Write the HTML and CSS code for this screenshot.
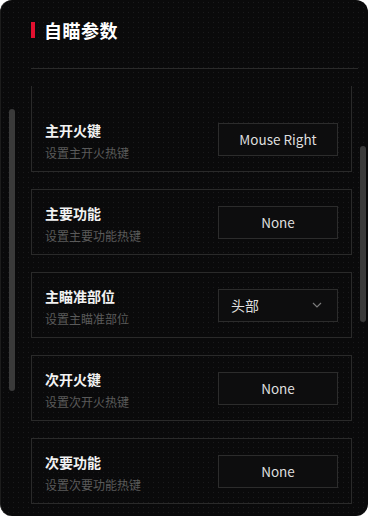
FILE: index.html
```html
<!DOCTYPE html>
<html lang="zh-CN">
<head>
    <meta charset="UTF-8">
    <meta name="viewport" content="width=device-width, initial-scale=1.0">
    <title>自瞄参数</title>
    <link rel="stylesheet" href="styles.css">
</head>
<body>
    <section class="panel">
      <header class="panel-header">
        <h1 class="panel-title">自瞄参数</h1>
      </header>

      <div class="panel-list">
        <div class="setting setting-first">
          <div class="setting-text">
            <span class="setting-name">主开火键</span>
            <span class="setting-hint">设置主开火热键</span>
          </div>
          <button class="setting-key" type="button">Mouse Right</button>
        </div>

        <div class="setting">
          <div class="setting-text">
            <span class="setting-name">主要功能</span>
            <span class="setting-hint">设置主要功能热键</span>
          </div>
          <button class="setting-key" type="button">None</button>
        </div>

        <div class="setting">
          <div class="setting-text">
            <span class="setting-name">主瞄准部位</span>
            <span class="setting-hint">设置主瞄准部位</span>
          </div>
          <button class="setting-key setting-select" type="button">
            头部
            <svg class="setting-arrow" width="10" height="6" viewBox="0 0 10 6" aria-hidden="true">
              <path d="M1 1l4 4 4-4" fill="none" stroke="currentColor" stroke-width="1.2"/>
            </svg>
          </button>
        </div>

        <div class="setting">
          <div class="setting-text">
            <span class="setting-name">次开火键</span>
            <span class="setting-hint">设置次开火热键</span>
          </div>
          <button class="setting-key" type="button">None</button>
        </div>

        <div class="setting">
          <div class="setting-text">
            <span class="setting-name">次要功能</span>
            <span class="setting-hint">设置次要功能热键</span>
          </div>
          <button class="setting-key" type="button">None</button>
        </div>
      </div>

      <span class="scroll-thumb scroll-thumb-left"></span>
      <span class="scroll-thumb scroll-thumb-right"></span>
    </section>
</body>
</html>
```

FILE: styles.css
```css
html,
body {
  height: 100%;
}

body {
  margin: 0;
  padding: 0;
  background-color: #ffffff;
  font-family: "Noto Sans CJK SC", "Noto Sans", sans-serif;
  color: #ffffff;
}

.panel {
  position: relative;
  box-sizing: border-box;
  display: flex;
  flex-direction: column;
  width: 368px;
  height: 516px;
  overflow: hidden;

  background-color: #0a0a0b;
  background-image: radial-gradient(circle, #1a1a1c 0.7px, transparent 0.8px);
  background-size: 5px 5px;
  border-radius: 12px;
  border-left: 1px solid #1c1c1c;
}

.panel-header {
  flex-shrink: 0;
  margin: 0 10px 0 30px;
  padding: 18px 0 0;
  height: 50px;
  border-bottom: 1px solid #2a2a2a;
}

.panel-title {
  display: flex;
  align-items: center;
  gap: 9px;
  margin: 0;
  font-size: 18px;
  line-height: 24px;
  font-weight: 700;
  letter-spacing: 0.5px;
}

.panel-title::before {
  content: "";
  width: 4px;
  height: 16px;
  background-color: #e3102f;
}

.panel-list {
  display: flex;
  flex-direction: column;
  gap: 17px;
  flex-grow: 1;
  margin: 17px 16px 0 30px;
  overflow: hidden;
}

.setting {
  display: flex;
  align-items: center;
  justify-content: space-between;
  flex-shrink: 0;
  box-sizing: border-box;
  height: 66px;
  padding: 0 13px;
  border: 1px solid #2a2a2a;
}

.setting-first {
  height: 87px;
  margin-top: -1px;
  padding-top: 21px;
}

.setting-text {
  display: flex;
  flex-direction: column;
  gap: 4px;
  padding-top: 4px;
}

.setting-name {
  font-size: 14px;
  line-height: 20px;
  font-weight: 700;
  color: #f2f2f2;
}

.setting-hint {
  font-size: 12px;
  line-height: 18px;
  color: #5a5a5a;
}

.setting-key {
  box-sizing: border-box;
  width: 120px;
  height: 33px;
  padding: 0 12px;

  font: inherit;
  font-size: 13.5px;
  color: #dedede;

  background-color: #0d0d0e;
  border: 1px solid #2c2c2c;
  cursor: pointer;
}

.setting-select {
  display: flex;
  align-items: center;
  justify-content: space-between;
  font-size: 14px;
}

.setting-arrow {
  margin-right: 3px;
  color: #7a7a7a;
}

.scroll-thumb {
  position: absolute;
  width: 6px;
  border-radius: 3px;
  background-color: #3a3a3a;
}

.scroll-thumb-left {
  left: 8px;
  top: 109px;
  height: 282px;
}

.scroll-thumb-right {
  right: 2px;
  top: 146px;
  height: 176px;
}
```
